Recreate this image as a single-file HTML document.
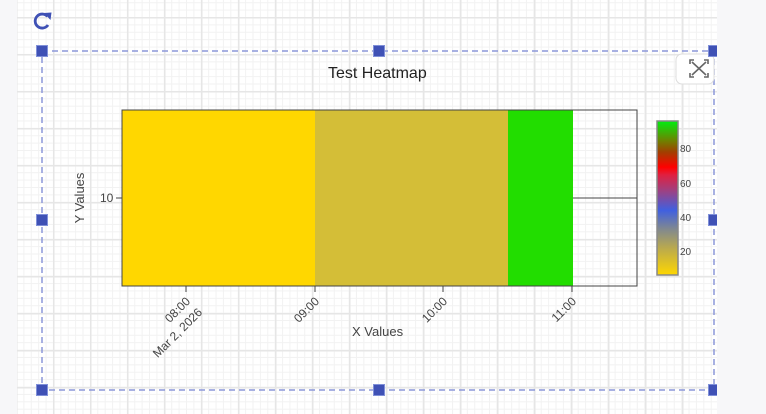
<!DOCTYPE html>
<html><head><meta charset="utf-8"><style>
html,body{margin:0;padding:0;width:766px;height:414px;overflow:hidden;background:#f7f7f9;font-family:"Liberation Sans",sans-serif}
#bg{position:absolute;left:17px;top:0;width:700px;height:414px;background-color:#fff;
background-image:
linear-gradient(to right,#e6e6e6 1.5px,transparent 1.5px),
linear-gradient(to bottom,#e6e6e6 1.5px,transparent 1.5px),
linear-gradient(to right,#f2f2f2 1px,transparent 1px),
linear-gradient(to bottom,#f2f2f2 1px,transparent 1px);
background-size:37px 37px,37px 37px,7.4px 7.4px,7.4px 7.4px;
background-position:-1px 17px,-1px 17px,-1px 17px,-1px 17px}
.h{position:absolute;width:12px;height:12px;background:#3f51b5;border:1px solid #8090d8;box-sizing:border-box}
.t{position:absolute;font-size:12px;color:#444;white-space:nowrap}
#rs{position:absolute;left:717px;top:0;width:49px;height:414px;background:#f7f7f9}
</style></head><body>
<div id="bg"></div>
<svg style="position:absolute;left:0;top:0" width="766" height="414">
<rect x="42" y="51" width="672" height="339" fill="none" stroke="#8c97d9" stroke-width="1.5" stroke-dasharray="6,4"/>
<path d="M47.5 16.5 A7 7 0 1 0 48 25" fill="none" stroke="#3f51b5" stroke-width="2.8"/>
<path d="M44 13 L51.5 12.5 L50.5 20 Z" fill="#3f51b5"/>
<rect x="122" y="110" width="193" height="176" fill="#FFD700"/>
<rect x="315" y="110" width="193" height="176" fill="#D4BE37"/>
<rect x="508" y="110" width="65" height="176" fill="#22DD00"/>
<line x1="573" y1="198" x2="637" y2="198" stroke="#444" stroke-width="1"/>
<rect x="122" y="110" width="515" height="176" fill="none" stroke="#444" stroke-width="1"/>
<line x1="116" y1="198" x2="122" y2="198" stroke="#444"/>
<g stroke="#444"><line x1="186" y1="286" x2="186" y2="292"/><line x1="315" y1="286" x2="315" y2="292"/><line x1="443" y1="286" x2="443" y2="292"/><line x1="572" y1="286" x2="572" y2="292"/></g>
<defs><linearGradient id="cb" x1="0" y1="1" x2="0" y2="0">
<stop offset="0" stop-color="#FFD700"/><stop offset="0.18" stop-color="#b8a850"/><stop offset="0.3" stop-color="#808890"/><stop offset="0.42" stop-color="#4060e0"/><stop offset="0.55" stop-color="#a04080"/><stop offset="0.65" stop-color="#e02040"/><stop offset="0.7" stop-color="#ff0000"/><stop offset="0.8" stop-color="#a04000"/><stop offset="0.87" stop-color="#708000"/><stop offset="1" stop-color="#00ee10"/></linearGradient></defs>
<rect x="657" y="121" width="21" height="154" fill="url(#cb)" stroke="#888" stroke-width="1.5"/>
<rect x="676" y="54" width="38" height="30" rx="6" fill="#fff" stroke="#ddd"/>
<g stroke="#666" stroke-width="1.6" fill="none"><path d="M690 64v-4h4M708 64v-4h-4M690 73v4h4M708 73v4h-4M692 62l14 13M706 62l-14 13"/></g>
<text x="0" y="0" transform="translate(84,198) rotate(-90)" font-size="13" fill="#444" text-anchor="middle" font-family="Liberation Sans">Y Values</text>
<g font-size="12" fill="#444" font-family="Liberation Sans" text-anchor="end">
<text transform="translate(191,302) rotate(-45)">08:00</text>
<text transform="translate(203,313) rotate(-45)">Mar 2, 2026</text>
<text transform="translate(320,302) rotate(-45)">09:00</text>
<text transform="translate(448,302) rotate(-45)">10:00</text>
<text transform="translate(577,302) rotate(-45)">11:00</text>
</g>
<g font-size="10" fill="#444" font-family="Liberation Sans"><text x="680" y="152">80</text><text x="680" y="187">60</text><text x="680" y="221">40</text><text x="680" y="255">20</text></g>
</svg>
<div class="t" style="left:328px;top:65px;font-size:16px;color:#222">Test Heatmap</div>
<div class="t" style="left:100px;top:191px">10</div>
<div class="t" style="left:352px;top:324px;font-size:13px">X Values</div>
<div class="h" style="left:36px;top:45px"></div><div class="h" style="left:373px;top:45px"></div><div class="h" style="left:708px;top:45px"></div>
<div class="h" style="left:36px;top:214px"></div><div class="h" style="left:708px;top:214px"></div>
<div class="h" style="left:36px;top:384px"></div><div class="h" style="left:373px;top:384px"></div><div class="h" style="left:708px;top:384px"></div>
<div id="rs"></div>
</body></html>
